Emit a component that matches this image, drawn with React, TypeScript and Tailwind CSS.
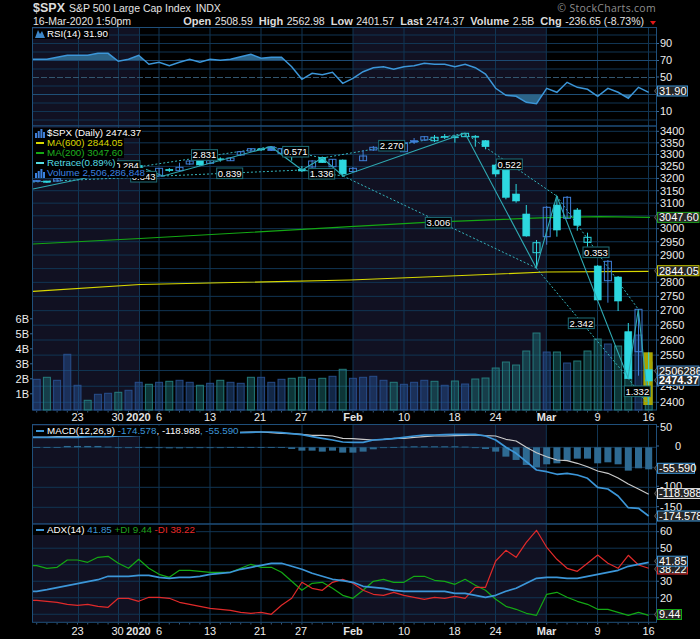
const SHADES = [
  [33, 139.5],
  [353, 546.3],
];
const V_LINES = [78.5, 118.5, 139.5, 159, 210, 261, 302, 353, 404, 454.5, 495.5, 546.3, 597.5, 648.5];

const CYAN = "#2dd8e0";
const BLUE = "#3f7fd8";
const GRID = "#113553";
const EDGE = "#1f4f7a";

const xAt = (i: number) => 36.7 + 10.2 * i;

// y values are read in 3x zoom units, so divide them back to page pixels
function line(zs: number[], base: number) {
  const start = `33,${(base + zs[0] / 3).toFixed(1)}`;
  return start + " " + zs.map((z, i) => `${xAt(i).toFixed(1)},${(base + z / 3).toFixed(1)}`).join(" ");
}

const RSI = [
  178, 178, 172, 166, 166, 166, 160, 160, 184, 178, 166, 193, 187, 197, 187, 178, 187, 178, 181, 178, 170, 163, 175,
  172, 172, 200, 238, 220, 224, 217, 250, 235, 215, 203, 200, 208, 200, 197, 190, 193, 193, 200, 193, 203, 222, 265,
  286, 289, 307, 311, 265, 277, 247, 262, 268, 289, 265, 277, 295, 262, 277,
];
const MACD_BLUE = [
  82, 82, 82, 82, 82, 80, 80, 80, 78, 78, 76, 74, 74, 74, 74, 74, 74, 72, 72, 70, 68, 67, 66, 66, 68, 71, 74, 80, 85,
  90, 96, 97, 97, 90, 88, 86, 82, 78, 75, 75, 74, 73, 73, 73, 78, 90, 112, 130, 155, 180, 185, 193, 190, 195, 205, 232,
  237, 258, 293, 295, 318,
];
const MACD_WHITE = [
  82, 82, 80, 80, 80, 80, 78, 78, 76, 76, 74, 72, 72, 72, 72, 72, 72, 70, 70, 68, 67, 66, 66, 68, 70, 71, 73, 76, 76,
  78, 85, 86, 88, 90, 88, 85, 85, 82, 80, 78, 78, 77, 76, 75, 77, 78, 88, 93, 112, 128, 140, 150, 152, 160, 170, 183,
  190, 204, 222, 237, 253,
];
const ADX_BLUE = [
  229, 224, 218, 212, 206, 200, 194, 184, 184, 184, 181, 181, 187, 190, 187, 187, 184, 178, 175, 172, 163, 157, 151,
  145, 145, 154, 163, 175, 184, 193, 197, 202, 214, 217, 220, 226, 229, 229, 229, 229, 229, 235, 235, 241, 247, 241,
  229, 220, 205, 190, 187, 187, 190, 190, 184, 178, 172, 166, 154, 148, 142,
];
const ADX_GREEN = [
  152, 160, 157, 135, 135, 142, 127, 124, 145, 160, 133, 160, 178, 187, 166, 166, 169, 172, 172, 172, 160, 148, 157,
  157, 172, 199, 226, 205, 202, 220, 241, 250, 226, 199, 193, 202, 202, 184, 184, 196, 199, 208, 193, 211, 226, 253,
  274, 283, 295, 301, 238, 232, 247, 259, 268, 283, 283, 292, 301, 292, 301,
];
const ADX_RED = [
  256, 259, 262, 268, 271, 268, 274, 277, 250, 250, 259, 247, 247, 250, 262, 268, 274, 280, 283, 286, 292, 295, 292,
  298, 271, 250, 202, 220, 226, 202, 193, 205, 226, 238, 241, 232, 241, 247, 253, 247, 250, 244, 250, 217, 217, 138,
  106, 127, 82, 46, 97, 133, 160, 169, 145, 120, 145, 160, 121, 150, 160,
];

// histogram in zoom units from the zero line, positive is downward
const HIST = [
  -1, -1, -1, -4, -4, -4, -4, -2, 1, 1, -1, 1, 1, 3, 3, 1, 1, 1, 1, -1, -1, -1, -1, -1, -1, 5, 10, 10, 13, 10, 16, 16,
  13, 6, 2, -1, -2, -3, -3, -3, -3, -3, -2, 1, 5, 13, 28, 38, 53, 60, 51, 48, 40, 34, 34, 48, 45, 51, 70, 63, 66,
];

// volume height in pixels, true = teal bar
const VOLUME: [number, boolean][] = [
  [30.7, false], [32.7, true], [29.7, false], [55.7, false], [24.7, false], [9.7, true], [15.7, false], [16.7, false],
  [17.7, true], [19.7, false], [27.7, false], [25.7, true], [27.7, false], [28.7, true], [29.7, false], [27.7, false],
  [24.7, true], [26.7, false], [29.7, true], [27.7, false], [26.7, false], [32.7, true], [32.7, false], [27.7, false],
  [30.7, false], [31.7, true], [32.7, true], [30.7, false], [31.7, true], [33.7, false], [40.7, true], [31.7, false],
  [32.7, false], [33.7, false], [29.7, false], [27.7, true], [25.7, false], [27.7, false], [29.7, false], [28.7, true],
  [24.7, false], [29, true], [26, false], [31, true], [32, true], [42, true], [48, true], [45, true], [59, true],
  [77, true], [58, false], [58, true], [47, false], [49, true], [59, true], [71, true], [66, false], [64, true],
  [70, true], [75, false], [48, true],
];

type Kind = "c" | "h" | "b" | "f";
// index, wick top, wick bottom, body top, body bottom, kind
const CANDLES: [number, number, number, number, number, Kind][] = [
  [0, 180, 182, 180.3, 181.7, "f"],
  [1, 181, 183, 181, 182.3, "c"],
  [2, 178, 182, 178.7, 181, "b"],
  [10, 164, 170, 165.5, 168, "c"],
  [12, 168, 176, 168.3, 176, "b"],
  [13, 168, 172, 169.3, 170.7, "c"],
  [14, 162.7, 171, 167.3, 170.7, "b"],
  [15, 160, 165, 161, 164, "b"],
  [16, 159, 166, 160, 165, "c"],
  [17, 160, 164, 160.7, 163.3, "b"],
  [18, 157.3, 161.7, 158.8, 159.8, "c"],
  [19, 157, 161, 158, 160.7, "b"],
  [20, 151, 156, 151.7, 155, "b"],
  [21, 148, 152, 148.7, 151, "b"],
  [22, 148, 151, 149, 150, "c"],
  [23, 146, 151, 146.7, 150.7, "f"],
  [24, 148, 154, 148.7, 153.3, "b"],
  [25, 150, 160.7, 151, 153, "c"],
  [26, 166, 172, 169.3, 171, "c"],
  [27, 160, 168, 161, 167, "b"],
  [28, 156.5, 163, 157.3, 162.7, "c"],
  [29, 159, 167, 159.3, 166.7, "b"],
  [30, 159.5, 176.7, 160, 174, "c"],
  [31, 167, 172, 168.3, 171.5, "b"],
  [32, 150, 161, 156, 160.7, "b"],
  [33, 146, 151, 147.3, 150, "b"],
  [35, 143, 149, 144, 147, "b"],
  [36, 142, 152, 142.7, 151.7, "b"],
  [37, 138, 144, 140.5, 142.3, "f"],
  [38, 136, 141, 136.7, 140, "b"],
  [39, 135, 142, 137.3, 140.7, "h"],
  [40, 134, 139, 136.3, 137.3, "c"],
  [41, 135, 142.7, 136.8, 137.8, "c"],
  [42, 133, 137, 133.3, 136.7, "h"],
  [43, 135, 146.7, 136.2, 137.2, "c"],
  [44, 140, 149.3, 140.7, 146.7, "c"],
  [45, 164, 176.7, 165, 174, "c"],
  [46, 169, 199.3, 170, 197.3, "c"],
  [47, 184, 202.7, 194, 201, "c"],
  [48, 205, 236.7, 214, 236, "c"],
  [49, 240, 268, 242.7, 252.7, "h"],
  [50, 206, 244.7, 207.3, 236.7, "b"],
  [51, 196, 236.7, 205, 230, "c"],
  [52, 196, 219, 197.3, 218.3, "b"],
  [53, 208, 230.7, 210, 225.3, "c"],
  [54, 232.7, 246.7, 237.3, 242.3, "h"],
  [55, 265, 301, 266, 300, "c"],
  [56, 260, 302.7, 261.3, 280.7, "b"],
  [57, 276, 311, 277, 301, "c"],
  [58, 323, 379, 331.7, 378.7, "c"],
  [59, 309, 375.7, 309.3, 351.7, "b"],
  [60, 352.3, 405, 369.7, 381, "c"],
];

const ZIGZAG = "33,189 139.5,166.7 163,176 271,146.7 302,170 322.3,158 343,176 465,133.3 536.3,268 556.7,196 628,378 638.3,309.3 648.5,405";
const DASHES = [
  [139.5, 166.7, 271, 146.7],
  [163, 176, 302, 170],
  [271, 146.7, 322.3, 158],
  [302, 170, 343, 176],
  [322.3, 158, 465, 133.3],
  [343, 176, 536.3, 268],
  [465, 133.3, 556.7, 196],
  [536.3, 268, 628, 378],
  [556.7, 196, 638.3, 309.3],
  [628, 378, 648.5, 405],
  [33, 182, 163, 176],
];
const RETRACE_LABELS: [string, number, number][] = [
  ["2.831", 204.5, 155],
  ["0.839", 229.7, 173.3],
  ["0.571", 295.7, 151.7],
  ["1.336", 321.7, 173.7],
  ["2.270", 391.7, 145.7],
  ["3.006", 438.3, 222.7],
  ["0.522", 509.3, 164.3],
  ["2.342", 581.3, 323.3],
  ["0.353", 596, 252.3],
  ["1.332", 637.3, 391.3],
  ["0.284", 127, 166],
  ["0.343", 143.7, 176.7],
];

const priceY = (p: number) => 131.3 + 778 * Math.log(3400 / p);
const PRICE_TICKS = [3400, 3350, 3300, 3250, 3200, 3150, 3100, 3050, 3000, 2950, 2900, 2850, 2800, 2750, 2700, 2650, 2600, 2550, 2500, 2450, 2400];
const rsiY = (v: number) => 120 - v * 0.85;
const adxY = (v: number) => 630.8 - 1.652 * v;
const macdY = (v: number) => 447.3 - 0.4 * v;

function Backdrop({ top, bottom, rows }: { top: number; bottom: number; rows: { y: number; bright?: boolean; dash?: boolean }[] }) {
  return (
    <>
      {SHADES.map(([a, b]) => (
        <rect key={a} x={a} y={top} width={b - a} height={bottom - top} fill="#111122" />
      ))}
      {V_LINES.map((x) => (
        <line key={x} x1={x} x2={x} y1={top} y2={bottom} stroke={GRID} />
      ))}
      {rows.map((r) => (
        <line
          key={r.y}
          x1={33}
          x2={656}
          y1={r.y}
          y2={r.y}
          stroke={r.bright ? "#1d4a72" : r.dash ? "#33566f" : GRID}
          strokeDasharray={r.dash ? "6 2" : undefined}
        />
      ))}
      <rect x={32.5} y={top} width={624} height={bottom - top} fill="none" stroke={EDGE} />
    </>
  );
}

function Tick({ y, label, x = 660 }: { y: number; label: string; x?: number }) {
  return (
    <>
      <line x1={656.5} x2={659} y1={y} y2={y} stroke="#3a6a9a" />
      <text x={x} y={y + 3.8} className="fill-[#ececec] text-[11px]">
        {label}
      </text>
    </>
  );
}

function Badge({ y, label, border, bold, width = 41.5 }: { y: number; label: string; border: string; bold?: boolean; width?: number }) {
  return (
    <>
      <polygon points={`654.5,${y} 657.5,${y - 4} 657.5,${y + 4}`} fill="#2a2a2a" stroke="#888" strokeWidth={0.6} />
      <rect x={657.5} y={y - 5} width={width} height={10} fill="#262626" stroke={border} />
      <text x={659} y={y + 3.8} className={`fill-white text-[11px] ${bold ? "font-bold" : ""}`}>
        {label}
      </text>
    </>
  );
}

function RetraceLabel({ text, x, y }: { text: string; x: number; y: number }) {
  return (
    <>
      <rect x={x - 13} y={y - 5.3} width={26} height={10.6} fill="#000" stroke="#1e6f78" />
      <text x={x} y={y + 3.4} textAnchor="middle" className="fill-white text-[9.5px]">
        {text}
      </text>
    </>
  );
}

function Chart({ top, height, children, legend }: { top: number; height: number; children: React.ReactNode; legend?: React.ReactNode }) {
  return (
    <div className="relative w-[700px] shrink-0">
      <svg width={700} height={height} viewBox={`0 ${top} 700 ${height}`} className="block overflow-visible">
        {children}
      </svg>
      {legend}
    </div>
  );
}

function DateAxis({ top, height }: { top: number; height: number }) {
  const plain: [string, number][] = [
    ["23", 77.5],
    ["30", 117.5],
    ["6", 159],
    ["13", 210],
    ["21", 260],
    ["27", 301],
    ["10", 404],
    ["18", 454.5],
    ["24", 495.5],
    ["9", 597.5],
    ["16", 648.5],
  ];
  const bold: [string, number][] = [
    ["2020", 138.5],
    ["Feb", 353],
    ["Mar", 546.5],
  ];
  const mid = top + height / 2 + 3.6;
  return (
    <svg width={700} height={height} viewBox={`0 ${top} 700 ${height}`} className="block shrink-0">
      {VOLUME.map((_, i) => (
        <line key={i} x1={xAt(i)} x2={xAt(i)} y1={top} y2={top + 1.5} stroke="#34587a" />
      ))}
      {plain.map(([t, x]) => (
        <text key={t} x={x} y={mid} textAnchor="middle" className="fill-[#ececec] text-[11px]">
          {t}
        </text>
      ))}
      {bold.map(([t, x]) => (
        <text key={t} x={x} y={mid} textAnchor="middle" className="fill-[#e4e4e4] text-[11px] font-bold">
          {t}
        </text>
      ))}
    </svg>
  );
}

function Stat({ label, value }: { label: string; value: string }) {
  return (
    <span className="flex items-baseline gap-[3.5px]">
      <b className="text-[11px] text-[#dcdcdc]">{label}</b>
      <span>{value}</span>
    </span>
  );
}

function Header() {
  return (
    <div className="h-[27px] shrink-0 pl-[33px] pr-[44px] text-[10.5px] leading-[12px] text-[#e4e4e4]">
      <div className="flex h-[14px] items-end justify-between">
        <div className="flex items-baseline">
          <b className="mr-[4px] text-[12.5px] text-[#dcdcdc]">$SPX</b>
          <span>S&amp;P 500 Large Cap Index</span>
          <span className="ml-[5px]">INDX</span>
        </div>
        <span className="font-['Open_Sans',sans-serif] text-[10.5px] tracking-[0.3px] text-[#8f8f8f]">© StockCharts.com</span>
      </div>
      <div className="flex h-[13px] items-end justify-between">
        <span>16-Mar-2020 1:50pm</span>
        <div className="flex items-baseline gap-[6px]">
          <Stat label="Open" value="2508.59" />
          <Stat label="High" value="2562.98" />
          <Stat label="Low" value="2401.57" />
          <Stat label="Last" value="2474.37" />
          <Stat label="Volume" value="2.5B" />
          <Stat label="Chg" value="-236.65 (-8.73%)" />
          <span className="h-0 w-0 border-x-[3.5px] border-t-[4px] border-x-transparent border-t-[#e01818]" />
        </div>
      </div>
    </div>
  );
}

function LegendRow({ icon, children, className }: { icon: React.ReactNode; children: React.ReactNode; className: string }) {
  return (
    <div className={`flex h-[10px] items-center gap-[2px] bg-black pl-[2px] pr-[1px] text-[9.8px] leading-[10px] ${className}`}>
      <span className="flex w-[10px] justify-center">{icon}</span>
      <span className="whitespace-nowrap">{children}</span>
    </div>
  );
}

const Dash = ({ className }: { className: string }) => <span className={`h-[2px] w-[8px] ${className}`} />;

function Bars({ color }: { color: string }) {
  return (
    <svg width={10} height={9} viewBox="0 0 10 9" fill={color}>
      <rect x={0} y={4} width={2} height={5} />
      <rect x={2.7} y={2} width={2} height={7} />
      <rect x={5.4} y={0} width={2} height={9} />
      <rect x={8} y={3} width={2} height={6} />
    </svg>
  );
}

function Series({ zs, base, color, width }: { zs: number[]; base: number; color: string; width: number }) {
  return <polyline points={line(zs, base)} fill="none" stroke={color} strokeWidth={width} strokeLinejoin="round" />;
}

function RsiPanel() {
  const pts = line(RSI, 0);
  const rows = [100, 90, 80, 70, 60, 50, 40, 30, 20, 10, 0].map((v) => ({
    y: rsiY(v),
    bright: v === 70 || v === 30,
    dash: v === 50,
  }));
  return (
    <Chart
      top={27}
      height={99}
      legend={
        <div className="absolute left-[33px] top-[2px]">
          <LegendRow
            className="text-white"
            icon={
              <svg width={10} height={8} viewBox="0 0 10 8" fill="#3c86c8">
                <path d="M0 8 L3 0 L5 4 L7 1 L10 8 Z" />
              </svg>
            }
          >
            RSI(14) 31.90
          </LegendRow>
        </div>
      }
    >
      <Backdrop top={27.5} bottom={126} rows={rows} />
      <clipPath id="rsi-high">
        <rect x={33} y={27} width={624} height={33} />
      </clipPath>
      <clipPath id="rsi-low">
        <rect x={33} y={94.3} width={624} height={32} />
      </clipPath>
      <polygon points={`33,60 ${pts} 648.5,60`} fill="#2c6488" clipPath="url(#rsi-high)" />
      <polygon points={`33,94.3 ${pts} 648.5,94.3`} fill="#2c6488" clipPath="url(#rsi-low)" />
      <polyline points={pts} fill="none" stroke="#3c96d8" strokeWidth={1.5} />
      {[90, 70, 50, 10].map((v) => (
        <Tick key={v} y={v === 50 ? 77 : rsiY(v)} label={String(v)} />
      ))}
      <Badge y={91} label="31.90" border="#3c96d8" width={30} />
    </Chart>
  );
}

function PricePanel() {
  const rows = PRICE_TICKS.map((p) => ({ y: priceY(p) }));
  return (
    <Chart
      top={126}
      height={285}
      legend={
        <div className="absolute left-[33px] top-[2px] flex flex-col items-start">
          <LegendRow className="text-white" icon={<Bars color="#3f7fd8" />}>
            $SPX (Daily) 2474.37
          </LegendRow>
          <LegendRow className="text-[#d8d800]" icon={<Dash className="bg-[#d8d800]" />}>
            MA(600) 2844.05
          </LegendRow>
          <LegendRow className="text-[#1fb01f]" icon={<Dash className="bg-[#14a814]" />}>
            MA(200) 3047.60
          </LegendRow>
          <LegendRow className="text-[#55dde4]" icon={<Dash className="bg-[#55dde4]" />}>
            Retrace(0.89%)
          </LegendRow>
          <LegendRow className="text-[#3b82e0]" icon={<Bars color="#3b82e0" />}>
            Volume 2,506,286,848
          </LegendRow>
        </div>
      }
    >
      <Backdrop top={126} bottom={410} rows={rows} />
      {VOLUME.map(([h, teal], i) => (
        <rect
          key={i}
          x={xAt(i) - 3.5}
          y={410 - h}
          width={7}
          height={h}
          fill={teal ? "#1f7f84" : "#2c5ea8"}
          fillOpacity={0.42}
          stroke={teal ? "#288a88" : "#2a5598"}
          strokeOpacity={0.85}
        />
      ))}
      {[6, 5, 4, 3, 2, 1].map((b) => {
        const y = 408.8 - b * 15;
        return (
          <g key={b}>
            <line x1={30} x2={32.5} y1={y} y2={y} stroke="#3a6a9a" />
            <text x={29} y={y + 3.8} textAnchor="end" className="fill-[#ececec] text-[11px]">
              {b}B
            </text>
          </g>
        );
      })}
      <polyline points="33,291.3 140,284.5 350,280 450,276 546,272 648.5,271.3" fill="none" stroke="#d8d800" strokeWidth={1.2} />
      <polyline points="33,244 140,238.5 350,226.7 426,222.3 546.7,217.7 600,216.7 650,217.4" fill="none" stroke="#14a814" strokeWidth={1.2} />
      <rect x={643.3} y={352.3} width={9.4} height={52.7} fill="#a8a400" />
      {DASHES.map(([a, b, c, d]) => (
        <line key={`${a}-${b}`} x1={a} y1={b} x2={c} y2={d} stroke="#35b4bc" strokeDasharray="2 2" />
      ))}
      {CANDLES.map(([i, wt, wb, bt, bb, kind]) => {
        const x = xAt(i);
        const color = kind === "c" || kind === "h" ? CYAN : BLUE;
        const solid = kind === "c" || kind === "f";
        return (
          <g key={i}>
            <line x1={x} x2={x} y1={wt} y2={wb} stroke={color} />
            <rect
              x={x - 3.5}
              y={bt}
              width={7}
              height={bb - bt}
              fill={solid ? color : "none"}
              stroke={color}
              strokeWidth={solid ? 0.6 : 1}
            />
          </g>
        );
      })}
      <polyline points={ZIGZAG} fill="none" stroke="#2fa9b2" strokeWidth={1.1} />
      {RETRACE_LABELS.map(([t, x, y]) => (
        <RetraceLabel key={t} text={t} x={x} y={y} />
      ))}
      {PRICE_TICKS.filter((p) => p !== 3050 && p !== 2850 && p !== 2500).map((p) => (
        <Tick key={p} y={priceY(p)} label={String(p)} />
      ))}
      <Badge y={217.4} label="3047.60" border="#1fa01f" />
      <Badge y={270.7} label="2844.05" border="#c8c800" />
      <Badge y={371} label="2506286" border="#3c86c8" />
      <Badge y={380.3} label="2474.37" border="#3c86c8" bold />
    </Chart>
  );
}

function MacdPanel() {
  const rows = [0, -50, -100, -150].map((v) => ({ y: macdY(v) }));
  return (
    <Chart
      top={424}
      height={100}
      legend={
        <div className="absolute left-[33px] top-[2px]">
          <LegendRow className="text-white" icon={<Dash className="bg-[#3c96d8]" />}>
            MACD(12,26,9) <span className="text-[#3c96d8]">-174.578</span>, -118.988<span className="text-[#3c96d8]">, -55.590</span>
          </LegendRow>
        </div>
      }
    >
      <Backdrop top={424.5} bottom={524} rows={rows} />
      {HIST.map((h, i) => {
        const y0 = macdY(0);
        const top = h < 0 ? y0 + h / 3 : y0;
        return <rect key={i} x={xAt(i) - 3.5} y={top} width={7} height={Math.max(Math.abs(h) / 3, 0.8)} fill="#2e6a92" />;
      })}
      <Series zs={MACD_WHITE} base={410} color="#c9c9c9" width={1.2} />
      <Series zs={MACD_BLUE} base={410} color="#3c96d8" width={1.7} />
      <Tick y={426.7} label="50" />
      <Tick y={446} label="0" x={675} />
      <Tick y={486.3} label="-100" />
      <Tick y={506.7} label="-150" />
      <Badge y={468.3} label="-55.590" border="#3c96d8" width={37} />
      <Badge y={493.5} label="-118.988" border="#d8d8d8" width={44} />
      <Badge y={516} label="-174.578" border="#3c96d8" width={44} />
    </Chart>
  );
}

function AdxPanel() {
  const rows = [60, 50, 40, 30, 20, 10].map((v) => ({ y: adxY(v) }));
  return (
    <Chart
      top={524}
      height={99}
      legend={
        <div className="absolute left-[33px] top-[1px]">
          <LegendRow className="text-white" icon={<Dash className="bg-[#3c96d8]" />}>
            ADX(14) <span className="text-[#3c96d8]">41.85</span> <span className="text-[#1fa01f]">+DI 9.44</span>{" "}
            <span className="text-[#e82a2a]">-DI 38.22</span>
          </LegendRow>
        </div>
      }
    >
      <Backdrop top={524} bottom={622.3} rows={rows} />
      <Series zs={ADX_GREEN} base={515} color="#14a814" width={1.2} />
      <Series zs={ADX_RED} base={515} color="#e02a2a" width={1.2} />
      <Series zs={ADX_BLUE} base={515} color="#3c96d8" width={1.7} />
      {[60, 50, 30, 20].map((v) => (
        <Tick key={v} y={adxY(v)} label={String(v)} />
      ))}
      <Badge y={569} label="38.22" border="#e02a2a" width={30} />
      <Badge y={561.2} label="41.85" border="#3c96d8" width={30} />
      <Badge y={614.5} label="9.44" border="#14a814" width={24} />
    </Chart>
  );
}

export default function App() {
  return (
    <div className="flex h-[639px] w-[700px] flex-col overflow-hidden bg-black font-['Liberation_Sans',Arial,sans-serif]">
      <Header />
      <RsiPanel />
      <PricePanel />
      <DateAxis top={411} height={13} />
      <MacdPanel />
      <AdxPanel />
      <DateAxis top={623} height={16} />
    </div>
  );
}
